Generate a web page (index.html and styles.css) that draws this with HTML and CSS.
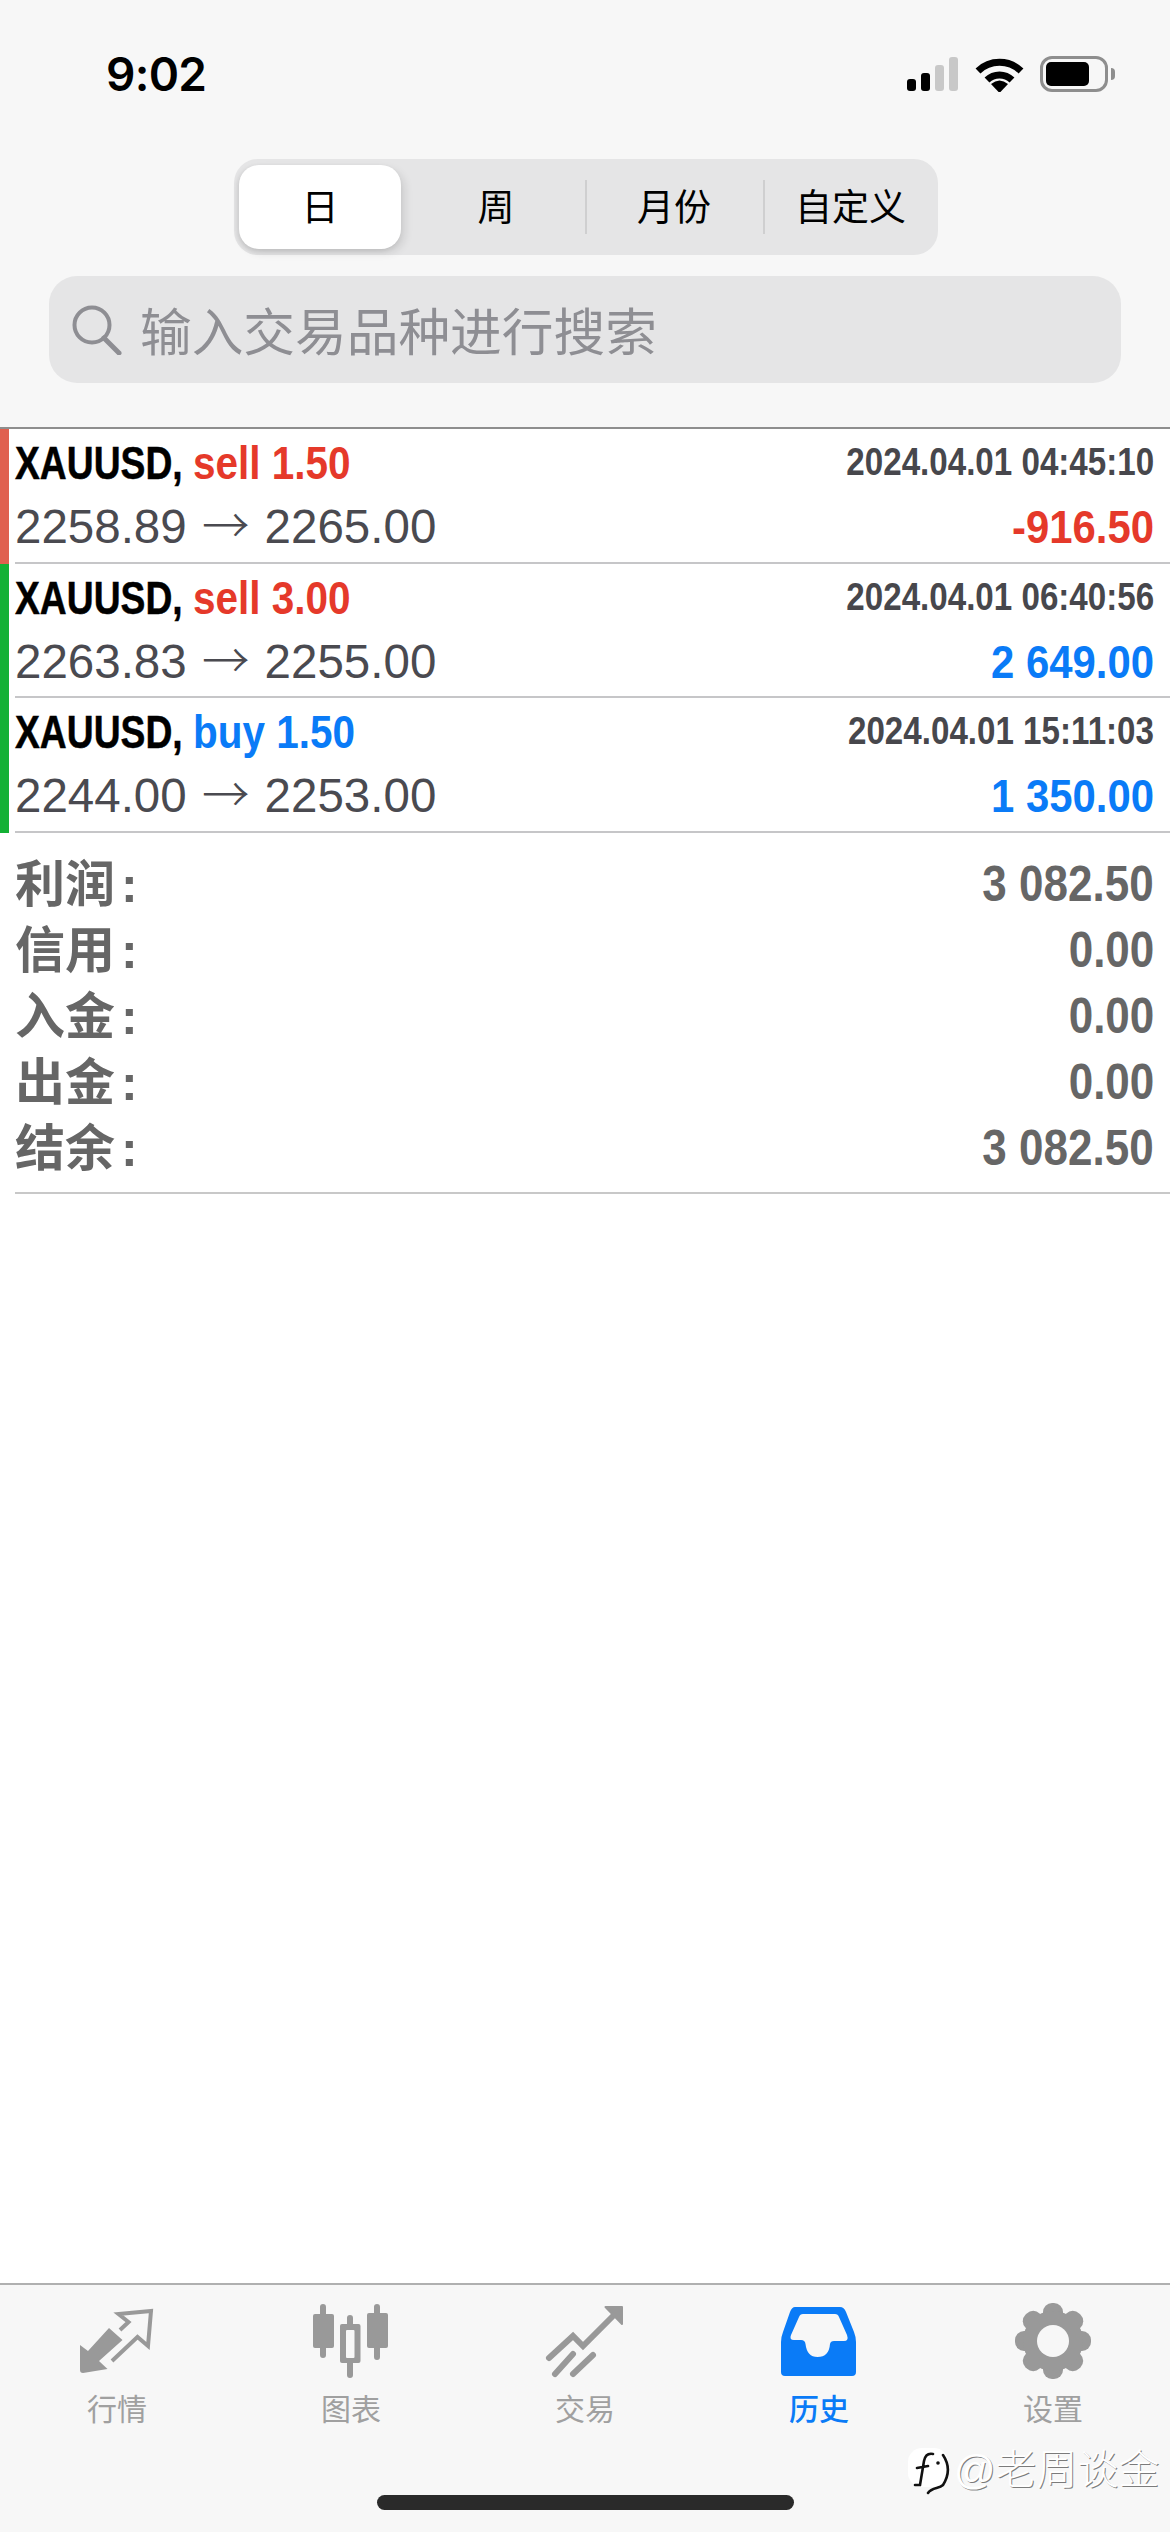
FILE: index.html
```html
<!DOCTYPE html>
<html lang="zh">
<head>
  <meta charset="UTF-8">
  <meta name="viewport" content="width=device-width, initial-scale=1.0">
  <title>历史</title>
  <link rel="stylesheet" href="styles.css">
</head>
<body>
  <div class="page">
    <div class="top">
      <div class="status">
        <span class="clock">9:02</span>
        <div class="status-icons">
          <div class="signal">
            <i class="b1"></i><i class="b2"></i><i class="b3 off"></i><i class="b4 off"></i>
          </div>
          <svg class="wifi" width="49" height="36" viewBox="0 0 49 36">
            <path d="M3 15A31 31 0 0 1 46 15" fill="none" stroke="#000" stroke-width="7"/>
            <path d="M12 24A18 18 0 0 1 37 24" fill="none" stroke="#000" stroke-width="7"/>
            <path d="M16 28Q24.500 21 33 28L24.500 37Z" fill="#000"/>
          </svg>
          <div class="battery"><div class="battery-level"></div></div>
          <div class="battery-nub"></div>
        </div>
      </div>

      <div class="segments">
        <div class="seg seg-on">日</div>
        <div class="seg seg-week">周</div>
        <div class="seg seg-month">月份</div>
        <div class="seg seg-custom">自定义</div>
      </div>

      <div class="search">
        <svg width="50" height="50" viewBox="0 0 50 50">
          <circle cx="20" cy="20" r="17.500" fill="none" stroke="#8e8e93" stroke-width="4"/>
          <path d="M32 33L47 48" stroke="#8e8e93" stroke-width="5" stroke-linecap="round"/>
        </svg>
        <span>输入交易品种进行搜索</span>
      </div>
    </div>

    <div class="deals">
      <div class="deal loss">
        <div class="line">
          <span class="sym">XAUUSD,</span>
          <span class="side sell">sell 1.50</span>
          <span class="date">2024.04.01 04:45:10</span>
        </div>
        <div class="line">
          <span class="prices">2258.89 <span class="arrow">→</span> 2265.00</span>
          <span class="profit sell">-916.50</span>
        </div>
      </div>
      <div class="deal">
        <div class="line">
          <span class="sym">XAUUSD,</span>
          <span class="side sell">sell 3.00</span>
          <span class="date">2024.04.01 06:40:56</span>
        </div>
        <div class="line">
          <span class="prices">2263.83 <span class="arrow">→</span> 2255.00</span>
          <span class="profit buy">2 649.00</span>
        </div>
      </div>
      <div class="deal">
        <div class="line">
          <span class="sym">XAUUSD,</span>
          <span class="side buy">buy 1.50</span>
          <span class="date">2024.04.01 15:11:03</span>
        </div>
        <div class="line">
          <span class="prices">2244.00 <span class="arrow">→</span> 2253.00</span>
          <span class="profit buy">1 350.00</span>
        </div>
      </div>
    </div>

    <div class="summary">
      <div class="sum-row"><span class="sum-label">利润<b>:</b></span><span class="sum-value">3 082.50</span></div>
      <div class="sum-row"><span class="sum-label">信用<b>:</b></span><span class="sum-value">0.00</span></div>
      <div class="sum-row"><span class="sum-label">入金<b>:</b></span><span class="sum-value">0.00</span></div>
      <div class="sum-row"><span class="sum-label">出金<b>:</b></span><span class="sum-value">0.00</span></div>
      <div class="sum-row"><span class="sum-label">结余<b>:</b></span><span class="sum-value">3 082.50</span></div>
    </div>

    <div class="spacer"></div>

    <div class="tabbar">
      <div class="tabs">
        <div class="tab">
          <svg width="90" height="80" viewBox="0 0 90 80">
            <path d="M8 43L16 49L37 26L50.500 38L27 59L35.500 67L11 71Q8 71 8 68Z" fill="#999"/>
            <path d="M40 59L65.500 35L76 44L79 9L46.500 12L56.500 20L48 28" fill="none" stroke="#999" stroke-width="4"/>
          </svg>
          <span>行情</span>
        </div>
        <div class="tab">
          <svg width="90" height="80" viewBox="0 0 90 80">
            <path d="M17 5V53M44 16V73M71 5V55" stroke="#999" stroke-width="6" stroke-linecap="round"/>
            <rect x="7" y="12" width="21" height="34" rx="2" fill="#999"/>
            <rect x="34" y="22" width="20.500" height="39" rx="2" fill="#999"/>
            <rect x="40" y="28" width="8.500" height="28" rx="1" fill="#f7f7f7"/>
            <rect x="61" y="11" width="21" height="35" rx="2" fill="#999"/>
          </svg>
          <span>图表</span>
        </div>
        <div class="tab">
          <svg width="90" height="80" viewBox="0 0 90 80">
            <path d="M9 56L33 34L43 44L78 9" fill="none" stroke="#999" stroke-width="6" stroke-linecap="round"/>
            <path d="M65.500 5H82V22Z" fill="#999" stroke="#999" stroke-width="2" stroke-linejoin="round"/>
            <path d="M15 72L33 52M33 72L53 53" stroke="#999" stroke-width="6" stroke-linecap="round"/>
          </svg>
          <span>交易</span>
        </div>
        <div class="tab tab-on">
          <svg width="90" height="80" viewBox="0 0 90 80">
            <path fill="#0a7bf7" fill-rule="evenodd" d="M21 5H66Q70 5 72 10L80 30Q82 35 82 40V70Q82 74 78 74H11Q7 74 7 70V40Q7 35 9 30L16 10Q18 5 21 5ZM29 12Q26 12 25 15L17 33Q15 38 20 38H27Q31 38 31.500 42Q33 55 43.500 55Q55 55 56 42Q56.500 39 60 39H70Q75 39 73 33L65 15Q64 12 61 12Z"/>
          </svg>
          <span>历史</span>
        </div>
        <div class="tab">
          <svg width="90" height="80" viewBox="0 0 90 80">
            <g fill="#999" transform="translate(45 39)">
              <rect x="-10" y="-38" width="20" height="76" rx="9"/>
              <rect x="-10" y="-38" width="20" height="76" rx="9" transform="rotate(45)"/>
              <rect x="-10" y="-38" width="20" height="76" rx="9" transform="rotate(90)"/>
              <rect x="-10" y="-38" width="20" height="76" rx="9" transform="rotate(135)"/>
              <circle r="30"/>
              <circle r="16" fill="#f7f7f7"/>
            </g>
          </svg>
          <span>设置</span>
        </div>
      </div>
      <div class="home-bar"></div>
    </div>

    <div class="watermark">
      <svg width="46" height="50" viewBox="0 0 46 50">
        <rect x="0" y="2" width="40" height="39" rx="14" fill="#fff"/>
        <path d="M25 8C20 7 17 10 16 15L12 39H7M9 22L20 20M35 9C41 18 42 28 35 39C31 43 24 41 20 47" fill="none" stroke="#111" stroke-width="2.600" stroke-linecap="round"/>
        <circle cx="30" cy="17" r="1.800" fill="#111"/>
      </svg>
      <span>@老周谈金</span>
    </div>
  </div>
</body>
</html>
```

FILE: styles.css
```css
html, body {
  margin: 0;
  padding: 0;
  background: #fff;
}

.page {
  position: relative;
  width: 1170px;
  height: 2532px;
  display: flex;
  flex-direction: column;
  overflow: hidden;
  font-family: "Liberation Sans", "Noto Sans CJK SC", sans-serif;
}

/* 顶部 */
.top {
  height: 429px;
  box-sizing: border-box;
  padding-top: 55px;
  background: #f7f7f7;
  border-bottom: 2px solid #8e8e8e;
}

.status {
  display: flex;
  justify-content: space-between;
  align-items: center;
  height: 38px;
  padding: 0 55px 0 106px;
}

.clock {
  font-family: Inter, "Liberation Sans", sans-serif;
  font-size: 46px;
  font-weight: 600;
  letter-spacing: -0.700px;
  color: #000;
}

.status-icons {
  display: flex;
  align-items: center;
}

.signal {
  display: flex;
  align-items: flex-end;
  gap: 5px;
  height: 34px;
  margin-right: 17px;
}

.signal i {
  display: block;
  width: 9px;
  border-radius: 3px;
  background: #000;
}

.signal .off {
  background: #c8c8c8;
}

.b1 { height: 12px; }
.b2 { height: 18px; }
.b3 { height: 26px; }
.b4 { height: 34px; }

.battery {
  box-sizing: border-box;
  width: 68px;
  height: 36px;
  margin-left: 16px;
  padding: 3px;
  border: 3px solid #8e8e8e;
  border-radius: 12px;
}

.battery-level {
  width: 43px;
  height: 24px;
  border-radius: 5px;
  background: #000;
}

.battery-nub {
  width: 4px;
  height: 12px;
  margin-left: 3px;
  border-radius: 0 6px 6px 0;
  background: #8e8e8e;
}

.segments {
  display: flex;
  box-sizing: border-box;
  width: 704px;
  height: 96px;
  margin: 66px 0 0 234px;
  padding: 6px 0;
  border-radius: 24px;
  background: #e5e5e6;
}

.seg {
  display: flex;
  align-items: center;
  justify-content: center;
  box-sizing: border-box;
  height: 84px;
  padding-bottom: 4px;
  font-size: 37px;
  color: #000;
}

.seg-on {
  width: 162px;
  margin-left: 5px;
  border-radius: 20px;
  background: #fff;
  box-shadow: -2px 2px 5px rgba(0, 0, 0, 0.1), 4px 4px 8px rgba(0, 0, 0, 0.1);
}

.seg-week {
  width: 184px;
  padding-left: 6px;
}

.seg-month,
.seg-custom {
  position: relative;
  width: 178px;
}

.seg-month::before,
.seg-custom::before {
  content: "";
  position: absolute;
  left: 0;
  top: 15px;
  height: 54px;
  width: 2px;
  background: #cfcfd0;
}

.seg-custom {
  width: 175px;
}

.search {
  display: flex;
  align-items: center;
  gap: 18px;
  box-sizing: border-box;
  width: 1072px;
  height: 107px;
  margin: 21px 0 0 49px;
  padding-left: 23px;
  border-radius: 28px;
  background: #e5e5e6;
  font-size: 51.700px;
  color: #8e8e93;
}

.search span {
  padding-bottom: 3px;
}

/* 成交列表 */
.deal {
  position: relative;
  box-sizing: border-box;
  height: 134.670px;
  padding: 2px 16px 0 15px;
}

.deal::before {
  content: "";
  position: absolute;
  left: 0;
  top: 0;
  bottom: 0;
  width: 9px;
  background: #14b135;
}

.deal.loss::before {
  background: #e0604f;
}

.deal::after {
  content: "";
  position: absolute;
  left: 15px;
  right: 0;
  bottom: 0;
  height: 2px;
  background: #c6c6c8;
}

.line {
  display: flex;
  align-items: center;
  height: 64px;
  white-space: nowrap;
}

.sym,
.side,
.date,
.profit {
  display: inline-block;
  font-weight: bold;
}

.sym {
  width: 178px;
  font-size: 46px;
  color: #000;
  -webkit-text-stroke: 0.500px #000;
  transform: scaleX(0.81);
  transform-origin: left center;
}

.side {
  font-size: 46px;
  transform: scaleX(0.88);
  transform-origin: left center;
}

.sell { color: #e5392a; }
.buy { color: #0a7bf7; }

.date {
  margin-left: auto;
  padding-bottom: 2px;
  font-size: 39px;
  color: #47474c;
  transform: scaleX(0.85);
  transform-origin: right center;
}

.prices {
  font-size: 47.500px;
  line-height: 54px;
  color: #4a4a50;
  word-spacing: 2px;
}

.arrow {
  font-family: "Noto Sans CJK SC", sans-serif;
  font-weight: 300;
  line-height: 0;
}

.profit {
  margin-left: auto;
  font-size: 46px;
  transform: scaleX(0.91);
  transform-origin: right center;
}

/* 汇总 */
.summary {
  margin: 18.500px 0 0 15px;
  padding-bottom: 10.500px;
  border-bottom: 2px solid #c8c8c8;
}

.sum-row {
  display: flex;
  justify-content: space-between;
  align-items: center;
  height: 66px;
  padding-right: 16px;
  color: #666;
}

.sum-label {
  padding-bottom: 9px;
  font-size: 50px;
  font-weight: 700;
}

.sum-label b {
  margin-left: 6px;
}

.sum-value {
  font-size: 50px;
  font-weight: bold;
  transform: scaleX(0.88);
  transform-origin: right center;
}

.spacer {
  flex: 1;
}

/* 底部 */
.tabbar {
  height: 249px;
  box-sizing: border-box;
  padding-top: 17px;
  border-top: 2px solid #b0b0b0;
  background: #f7f7f7;
}

.tabs {
  display: grid;
  grid-template-columns: repeat(5, 1fr);
}

.tab {
  display: flex;
  flex-direction: column;
  align-items: center;
  font-size: 30px;
  line-height: 36px;
  color: #a0a0a0;
}

.tab svg {
  margin-bottom: 10px;
}

.tab-on {
  font-weight: 500;
  color: #0a7bf7;
}

.home-bar {
  width: 417px;
  height: 15px;
  margin: 67px 0 0 377px;
  border-radius: 8px;
  background: #2a2a2a;
}

/* 水印 */
.watermark {
  position: absolute;
  left: 908px;
  top: 2436px;
  display: flex;
  align-items: flex-start;
  font-size: 41px;
  font-weight: 300;
  color: #fff;
  text-shadow: 1px 1px 0 rgba(0, 0, 0, 0.5);
}

.watermark svg {
  margin-top: 10px;
}
```
